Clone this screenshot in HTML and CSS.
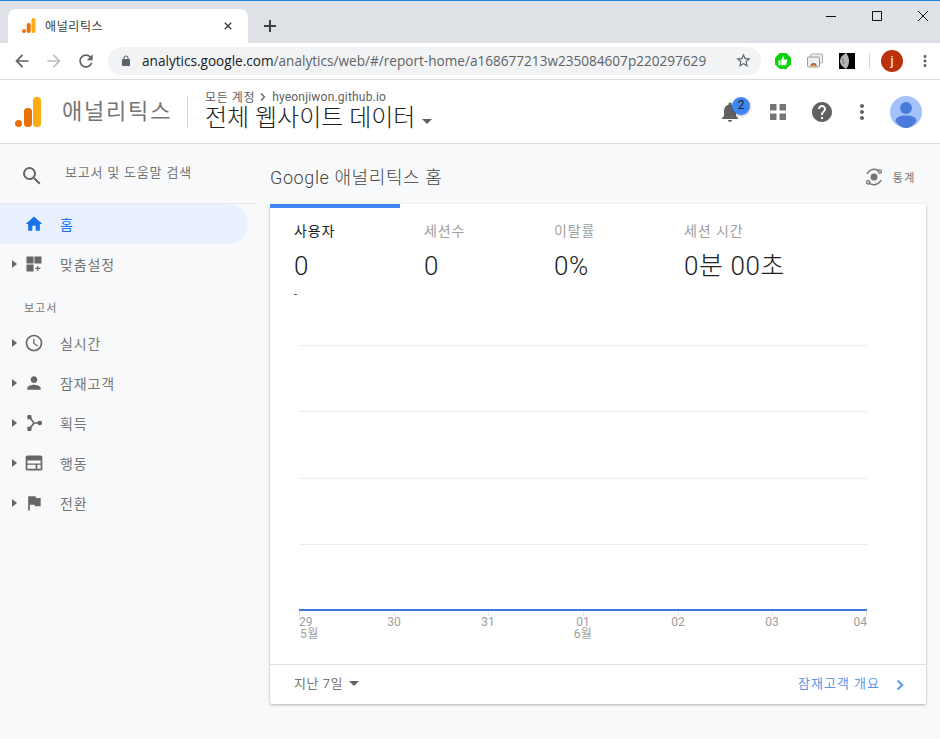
FILE: index.html
```html
<!DOCTYPE html>
<html lang="ko">
<head>
    <meta charset="utf-8">
    <title>애널리틱스</title>
    <link rel="stylesheet" href="styles.css">
</head>
<body>
    <!-- browser chrome -->
    <div class="tabstrip">
        <div class="tab">
            <svg class="tab-logo" viewBox="0 0 14 15"><rect x="9.5" y="0" width="4" height="15" rx="2" fill="#fbac17"/><rect x="4.7" y="5" width="4" height="10" rx="2" fill="#e8710a"/><circle cx="2" cy="13" r="2" fill="#e8710a"/></svg>
            <span class="tab-title">애널리틱스</span>
            <svg class="tab-close" viewBox="0 0 10 10"><path d="M1 1l8 8M9 1l-8 8"/></svg>
        </div>
        <svg class="new-tab" viewBox="0 0 12 12"><path d="M6 0v12M0 6h12"/></svg>
        <div class="window-controls">
            <svg viewBox="0 0 12 12"><path d="M1 6.5h10"/></svg>
            <svg viewBox="0 0 12 12"><path d="M1.5 1.5h9v9h-9z"/></svg>
            <svg viewBox="0 0 12 12"><path d="M1 1l10 10M11 1L1 11"/></svg>
        </div>
    </div>
    <div class="toolbar">
        <svg class="tool-icon" viewBox="0 0 24 24"><path d="M20 11H7.83l5.59-5.59L12 4l-8 8 8 8 1.41-1.41L7.83 13H20v-2z"/></svg>
        <svg class="tool-icon disabled" viewBox="0 0 24 24"><path d="M12 4l-1.41 1.41L16.17 11H4v2h12.17l-5.58 5.59L12 20l8-8z"/></svg>
        <svg class="tool-icon" viewBox="0 0 24 24"><path d="M17.65 6.35C16.2 4.9 14.21 4 12 4c-4.42 0-7.99 3.58-7.99 8s3.57 8 7.99 8c3.73 0 6.84-2.55 7.73-6h-2.08c-.82 2.33-3.04 4-5.65 4-3.31 0-6-2.69-6-6s2.69-6 6-6c1.66 0 3.14.69 4.22 1.78L13 11h7V4l-2.35 2.35z"/></svg>
        <div class="omnibox">
            <svg class="lock" viewBox="0 0 24 24"><path d="M18 8h-1V6c0-2.76-2.24-5-5-5S7 3.24 7 6v2H6c-1.1 0-2 .9-2 2v10c0 1.1.9 2 2 2h12c1.1 0 2-.9 2-2V10c0-1.1-.9-2-2-2zm-3.1 0H9.1V6c0-1.71 1.39-3.1 2.9-3.1 1.71 0 2.9 1.39 2.9 3.1v2z"/></svg>
            <span class="url"><b>analytics.google.com</b>/analytics/web/#/report-home/a168677213w235084607p220297629</span>
            <svg class="star" viewBox="0 0 24 24"><path d="M22 9.24l-7.19-.62L12 2 9.19 8.63 2 9.24l5.46 4.73L5.82 21 12 17.27 18.18 21l-1.63-7.03L22 9.24zM12 15.4l-3.76 2.27 1-4.28-3.32-2.88 4.38-.38L12 6.1l1.71 4.04 4.38.38-3.32 2.88 1 4.28L12 15.4z"/></svg>
        </div>
        <div class="extensions">
            <svg class="ext thumb" viewBox="0 0 16 16"><path d="M4.7 0h6.6L16 4.7v6.6L11.3 16H4.7L0 11.3V4.7z" fill="#0fd20f"/><path d="M3.5 7.5h2v4.7h-2zM6.2 7.3L8 3.6c.9 0 1.3.7 1.1 1.5l-.3 1.5h2.6c.7 0 1 .5.8 1.2l-1 3.6c-.2.6-.5.8-1 .8H6.2z" fill="#fff"/></svg>
            <svg class="ext" viewBox="0 0 16 16"><rect x="3.5" y="1" width="12" height="9" rx="1" fill="#eee" stroke="#aaa"/><rect x=".5" y="4" width="12" height="10" rx="1" fill="#eee" stroke="#999"/><path d="M3.5 13a3 3 0 0 1 6 0z" fill="#e8453c"/><path d="M6.5 10a3 3 0 0 1 3 3H8z" fill="#4285f4"/><circle cx="6.5" cy="13" r="1.2" fill="#fbbc05"/></svg>
            <svg class="ext moon" viewBox="0 0 16 16"><rect width="16" height="16" fill="#000"/><path d="M7 0C3 2 1 5 1 8s2 6 6 8c2-2 3-5 3-8S9 2 7 0z" fill="#b5b5b5"/><path d="M3 5l2 1-1 2 2 2-2 1z" fill="#777"/></svg>
            <span class="ext-divider"></span>
            <span class="profile">j</span>
            <svg class="tool-icon kebab" viewBox="0 0 24 24"><path d="M12 8c1.1 0 2-.9 2-2s-.9-2-2-2-2 .9-2 2 .9 2 2 2zm0 2c-1.1 0-2 .9-2 2s.9 2 2 2 2-.9 2-2-.9-2-2-2zm0 6c-1.1 0-2 .9-2 2s.9 2 2 2 2-.9 2-2-.9-2-2-2z"/></svg>
        </div>
    </div>

    <!-- analytics header -->
    <header class="app-header">
        <svg class="ga-logo" viewBox="0 0 26 30"><rect x="18" y="0" width="8" height="30" rx="3.5" fill="#fbac17"/><rect x="9" y="11" width="8" height="19" rx="3.5" fill="#e8710a"/><circle cx="3.5" cy="26.5" r="3.5" fill="#e8710a"/></svg>
        <span class="app-name">애널리틱스</span>
        <div class="view-picker">
            <div class="crumbs">
                <span class="crumb-kr">모든 계정</span>
                <svg class="crumb-arrow" viewBox="0 0 6 8"><path d="M1 .5L4.5 4 1 7.5"/></svg>
                <span class="crumb-site">hyeonjiwon.github.io</span>
            </div>
            <div class="view-name">전체 웹사이트 데이터 <span class="caret"></span></div>
        </div>
        <div class="header-actions">
            <div class="bell">
                <svg class="head-icon" viewBox="0 0 24 24"><path d="M12 22c1.1 0 2-.9 2-2h-4c0 1.1.89 2 2 2zm6-6v-5c0-3.07-1.64-5.64-4.5-6.32V4c0-.83-.67-1.5-1.5-1.5s-1.5.67-1.5 1.5v.68C7.63 5.36 6 7.92 6 11v5l-2 2v1h16v-1l-2-2z"/></svg>
                <span class="badge">2</span>
            </div>
            <svg class="head-icon apps" viewBox="0 0 24 24"><path d="M4 4h6.5v6.5H4zM13.5 4H20v6.5h-6.5zM4 13.5h6.5V20H4zM13.5 13.5H20V20h-6.5z"/></svg>
            <svg class="head-icon" viewBox="0 0 24 24"><path d="M12 2C6.48 2 2 6.48 2 12s4.48 10 10 10 10-4.48 10-10S17.52 2 12 2zm1 17h-2v-2h2v2zm2.07-7.75l-.9.92C13.45 12.9 13 13.5 13 15h-2v-.5c0-1.1.45-2.1 1.17-2.83l1.24-1.26c.37-.36.59-.86.59-1.41 0-1.1-.9-2-2-2s-2 .9-2 2H8c0-2.21 1.79-4 4-4s4 1.79 4 4c0 .88-.36 1.68-.93 2.25z"/></svg>
            <svg class="head-icon" viewBox="0 0 24 24"><path d="M12 8c1.1 0 2-.9 2-2s-.9-2-2-2-2 .9-2 2 .9 2 2 2zm0 2c-1.1 0-2 .9-2 2s.9 2 2 2 2-.9 2-2-.9-2-2-2zm0 6c-1.1 0-2 .9-2 2s.9 2 2 2 2-.9 2-2-.9-2-2-2z"/></svg>
            <svg class="avatar" viewBox="0 0 32 32"><circle cx="16" cy="16" r="16" fill="#a3c1fa"/><circle cx="16" cy="12" r="6" fill="#4a7bdc"/><path d="M5.5 25c0-4 5-5.5 10.5-5.5s10.5 1.5 10.5 5.5c-2.5 4-6.5 7-10.5 7s-8-3-10.5-7z" fill="#4a7bdc"/></svg>
        </div>
    </header>

    <div class="layout">
        <nav class="sidebar">
            <div class="search-row">
                <svg class="search-icon" viewBox="0 0 24 24"><path d="M15.5 14h-.79l-.28-.27A6.471 6.471 0 0 0 16 9.5 6.5 6.5 0 1 0 9.5 16c1.61 0 3.09-.59 4.23-1.57l.27.28v.79l5 4.99L20.49 19l-4.99-5zm-6 0C7.01 14 5 11.99 5 9.5S7.01 5 9.5 5 14 7.01 14 9.5 11.99 14 9.5 14z"/></svg>
                <span class="search-text">보고서 및 도움말 검색</span>
            </div>
            <div class="nav-item active">
                <svg class="nav-icon" viewBox="0 0 24 24"><path d="M10 20v-6h4v6h5v-8h3L12 3 2 12h3v8z"/></svg>
                <span>홈</span>
            </div>
            <div class="nav-item expandable">
                <svg class="nav-icon" viewBox="0 0 24 24"><path d="M3 3h8.5v8.5H3zM12.5 3H21v8.5h-8.5zM3 12.5h8.5V21H3zM15.8 14h1.4v2.5h2.5v1.4h-2.5v2.5h-1.4v-2.5h-2.5v-1.4h2.5z"/></svg>
                <span>맞춤설정</span>
            </div>
            <div class="nav-heading">보고서</div>
            <div class="nav-item expandable">
                <svg class="nav-icon" viewBox="0 0 24 24"><path d="M11.99 2C6.47 2 2 6.48 2 12s4.47 10 9.99 10C17.52 22 22 17.52 22 12S17.52 2 11.99 2zM12 20c-4.42 0-8-3.58-8-8s3.58-8 8-8 8 3.58 8 8-3.58 8-8 8zm.5-13H11v6l5.25 3.15.75-1.23-4.5-2.67z"/></svg>
                <span>실시간</span>
            </div>
            <div class="nav-item expandable">
                <svg class="nav-icon" viewBox="0 0 24 24"><path d="M12 12c2.21 0 4-1.79 4-4s-1.79-4-4-4-4 1.79-4 4 1.79 4 4 4zm0 2c-2.67 0-8 1.34-8 4v2h16v-2c0-2.66-5.33-4-8-4z"/></svg>
                <span>잠재고객</span>
            </div>
            <div class="nav-item expandable">
                <svg class="nav-icon" viewBox="0 0 24 24"><rect x="4" y="2.5" width="5" height="5" rx="1"/><rect x="4" y="16.5" width="5" height="5" rx="1"/><circle cx="19" cy="12" r="2.8"/><path class="nav-line" d="M7 5.5l5 6.5h6M12 12l-5 6.5"/></svg>
                <span>획득</span>
            </div>
            <div class="nav-item expandable">
                <svg class="nav-icon" viewBox="0 0 24 24"><path fill-rule="evenodd" d="M4 3h16c1.1 0 2 .9 2 2v14c0 1.1-.9 2-2 2H4c-1.1 0-2-.9-2-2V5c0-1.1.9-2 2-2zm0 6v3.5h16V9zm0 5v5h10v-5zm12 0v5h4v-5z"/></svg>
                <span>행동</span>
            </div>
            <div class="nav-item expandable">
                <svg class="nav-icon" viewBox="0 0 24 24"><path d="M14.4 6L14 4H5v17h2v-7h5.6l.4 2h7V6z"/></svg>
                <span>전환</span>
            </div>
        </nav>

        <main class="content">
            <div class="content-head">
                <h1 class="page-title">Google 애널리틱스 홈</h1>
                <div class="insights">
                    <svg class="insights-icon" viewBox="0 0 18 18"><circle cx="9" cy="9" r="3.5" fill="#757575"/><path d="M14.5 3.5A7.700 7.700 0 0 0 2 6M3.500 14.5A7.700 7.700 0 0 0 16 12" fill="none" stroke="#757575" stroke-width="1.5"/><circle cx="14.8" cy="3.6" r="1.7" fill="none" stroke="#757575" stroke-width="1.3"/><circle cx="3.2" cy="14.4" r="1.7" fill="none" stroke="#757575" stroke-width="1.3"/></svg>
                    <span>통계</span>
                </div>
            </div>
            <section class="card">
                <div class="metrics">
                    <div class="metric selected">
                        <div class="metric-label">사용자</div>
                        <div class="metric-value">0</div>
                        <div class="metric-change">-</div>
                    </div>
                    <div class="metric">
                        <div class="metric-label">세션수</div>
                        <div class="metric-value">0</div>
                    </div>
                    <div class="metric">
                        <div class="metric-label">이탈률</div>
                        <div class="metric-value">0%</div>
                    </div>
                    <div class="metric">
                        <div class="metric-label">세션 시간</div>
                        <div class="metric-value">0분 00초</div>
                    </div>
                </div>
                <svg class="chart" viewBox="0 0 656 364">
                    <path class="grid" d="M29 45.5h568M29 111.5h568M29 178.5h568M29 244.5h568"/>
                    <path class="tick" d="M29.5 310v6M124.5 310v6M218.5 310v6M313.5 310v6M408.5 310v6M502.5 310v6M596.5 310v6"/>
                    <rect class="line" x="29" y="309" width="568" height="2"/>
                    <text class="axis" x="29" y="326">29</text>
                    <text class="axis month" x="30" y="338">5월</text>
                    <text class="axis mid" x="124" y="326">30</text>
                    <text class="axis mid" x="218" y="326">31</text>
                    <text class="axis mid" x="313" y="326">01</text>
                    <text class="axis month mid" x="313" y="338">6월</text>
                    <text class="axis mid" x="408" y="326">02</text>
                    <text class="axis mid" x="502" y="326">03</text>
                    <text class="axis end" x="597" y="326">04</text>
                </svg>
                <div class="card-foot">
                    <div class="range">지난 7일 <span class="caret small"></span></div>
                    <div class="report-link">
                        <span>잠재고객 개요</span>
                        <svg class="link-chevron" viewBox="0 0 24 24"><path d="M10 6L8.59 7.41 13.17 12l-4.58 4.59L10 18l6-6z"/></svg>
                    </div>
                </div>
            </section>
        </main>
    </div>
</body>
</html>
```
FILE: styles.css
```css
* {
    box-sizing: border-box;
}

html,
body {
    height: 100%;
}

body {
    margin: 0;
    overflow: hidden;
    background: #f8f9fb;
    color: #5f6368;
    font-family: Roboto, "Noto Sans CJK KR", sans-serif;
}

/* browser chrome */
.tabstrip {
    display: flex;
    align-items: flex-end;
    height: 43px;
    padding-left: 8px;
    background: #dee1e6;
    border-top: 1px solid #1a88e0;
}

.tab {
    display: flex;
    align-items: center;
    width: 240px;
    height: 34px;
    padding: 0 14px 1px 14px;
    background: #fff;
    border-radius: 8px 8px 0 0;
}

.tab-logo {
    width: 14px;
    height: 15px;
    margin-right: 9px;
}

.tab-title {
    flex: 1;
    font-size: 12px;
    letter-spacing: 0.6px;
    color: #3c4043;
}

.tab-close {
    width: 8px;
    height: 8px;
    margin-right: 2px;
    fill: none;
    stroke: #3c4043;
    stroke-width: 1.8;
}

.new-tab {
    width: 12px;
    height: 12px;
    margin: 0 0 11px 16px;
    fill: none;
    stroke: #3c4043;
    stroke-width: 2;
}

.window-controls {
    display: flex;
    gap: 34px;
    margin: 0 11px 0 auto;
    align-self: flex-start;
    padding-top: 9px;
}

.window-controls svg {
    width: 12px;
    height: 12px;
    fill: none;
    stroke: #111;
    stroke-width: 1;
}

.toolbar {
    display: flex;
    align-items: center;
    height: 37px;
    padding: 0 0 1px 12px;
    background: #fff;
    border-bottom: 1px solid #d8d9da;
}

.tool-icon {
    width: 20px;
    height: 20px;
    margin-right: 12px;
    fill: #5f6368;
}

.tool-icon.disabled {
    fill: #bdc1c6;
}

.omnibox {
    display: flex;
    align-items: center;
    width: 653px;
    height: 28px;
    padding: 0 9px 0 12px;
    background: #f1f3f4;
    border-radius: 14px;
}

.lock {
    width: 12px;
    height: 12px;
    margin-right: 10px;
    fill: #5f6368;
}

.url {
    flex: 1;
    font-family: "Open Sans", "Noto Sans", sans-serif;
    font-size: 13.6px;
    white-space: nowrap;
    color: #5f6368;
}

.url b {
    font-weight: 400;
    color: #202124;
}

.star {
    width: 17px;
    height: 17px;
    fill: #5f6368;
}

.extensions {
    display: flex;
    align-items: center;
    flex: 1;
    padding-left: 14px;
}

.ext {
    width: 16px;
    height: 16px;
    margin-right: 14px;
}

.thumb {
    margin-right: 16px;
}

.moon {
    margin-left: 2px;
}

.ext-divider {
    width: 1px;
    height: 16px;
    margin-right: 11px;
    background: #d5d7da;
}

.profile {
    width: 22px;
    height: 22px;
    margin-right: 13px;
    border-radius: 50%;
    background: #bb310b;
    color: #fff;
    font-size: 13px;
    line-height: 22px;
    text-align: center;
}

.kebab {
    width: 18px;
    height: 18px;
    margin: 0;
}

/* analytics header */
.app-header {
    display: flex;
    align-items: center;
    height: 64px;
    padding: 0 18px 0 15px;
    background: #fff;
    border-bottom: 1px solid #dadce0;
}

.ga-logo {
    width: 26px;
    height: 30px;
    margin-right: 21px;
}

.app-name {
    width: 125px;
    margin-bottom: 6px;
    font-size: 22px;
    letter-spacing: 1.8px;
    color: #757575;
}

.view-picker {
    height: 32px;
    padding-left: 17px;
    border-left: 1px solid #d5d7da;
    margin-right: auto;
}

.crumbs {
    display: flex;
    align-items: center;
    height: 14px;
    margin-top: -6px;
    font-size: 12px;
    color: #616161;
}

.crumb-kr {
    letter-spacing: 0.6px;
}

.crumb-site {
    letter-spacing: 0.2px;
}

.crumb-arrow {
    width: 6px;
    height: 8px;
    margin: 0 6px 0 5px;
    fill: none;
    stroke: #616161;
    stroke-width: 1.3;
}

.view-name {
    font-size: 24px;
    font-weight: 300;
    line-height: 29px;
    color: #212121;
    white-space: nowrap;
}

.caret {
    display: inline-block;
    margin-left: 1px;
    vertical-align: 2px;
    border-top: 5px solid #616161;
    border-left: 5.5px solid transparent;
    border-right: 5.5px solid transparent;
}

.caret.small {
    margin-left: 2px;
}

.header-actions {
    display: flex;
    align-items: center;
    gap: 16px;
}

.bell {
    position: relative;
    display: flex;
    margin-right: 8px;
}

.head-icon {
    width: 24px;
    height: 24px;
    fill: #616161;
}

.apps {
    margin-right: 4px;
    fill: #757575;
}

.badge {
    position: absolute;
    top: -3px;
    left: 14px;
    width: 18px;
    height: 18px;
    border-radius: 50%;
    background: #3f86f4;
    box-shadow: 0 1px 3px rgba(0, 0, 0, 0.3);
    color: #212121;
    font-size: 12px;
    line-height: 17px;
    text-align: center;
}

.avatar {
    width: 32px;
    height: 32px;
}

/* sidebar */
.layout {
    display: flex;
    height: 596px;
}

.sidebar {
    width: 270px;
    padding-right: 22px;
    flex: none;
}

.search-row {
    display: flex;
    align-items: center;
    width: 256px;
    height: 60px;
    padding-left: 20px;
    border-bottom: 1px solid #e6e7e9;
    font-size: 13px;
    letter-spacing: 0.8px;
    color: #757575;
}

.search-icon {
    width: 24px;
    height: 24px;
    margin-top: 4px;
    fill: #666;
}

.search-text {
    margin-left: 21px;
    margin-bottom: 5px;
    white-space: nowrap;
}

.nav-icon {
    width: 20px;
    height: 20px;
    flex: none;
    fill: #666;
}

.nav-line {
    fill: none;
    stroke: #666;
    stroke-width: 2;
}

.nav-item {
    position: relative;
    display: flex;
    align-items: center;
    height: 40px;
    padding-left: 24px;
    font-size: 14px;
    letter-spacing: 0.9px;
    color: #757575;
}

.nav-item span {
    margin: 0 0 1px 16px;
}

.nav-item.active {
    background: #e8f0fe;
    border-radius: 0 20px 20px 0;
    color: #1a73e8;
}

.nav-item.active .nav-icon {
    fill: #1a73e8;
}

.nav-item.expandable::before {
    content: "";
    position: absolute;
    left: 12px;
    top: 16px;
    border-left: 5px solid #666;
    border-top: 4px solid transparent;
    border-bottom: 4px solid transparent;
}

.nav-heading {
    height: 39px;
    padding: 15px 0 0 24px;
    font-size: 11px;
    letter-spacing: 1px;
    color: #757575;
}

/* main column */
.content {
    width: 656px;
}

.content-head {
    display: flex;
    align-items: center;
    justify-content: space-between;
    height: 60px;
    padding-top: 4px;
}

.page-title {
    margin: 0;
    font-size: 18px;
    font-weight: 300;
    letter-spacing: 0.6px;
    color: #444;
}

.insights {
    display: flex;
    align-items: center;
    gap: 10px;
    margin: 2px 10px 0 0;
    font-size: 11px;
    letter-spacing: 1.5px;
    color: #757575;
}

.insights-icon {
    width: 18px;
    height: 18px;
}

.card {
    height: 500px;
    background: #fff;
    border-radius: 2px;
    box-shadow: 0 1px 3px rgba(0, 0, 0, 0.3);
}

.metrics {
    display: flex;
    height: 96px;
}

.metric {
    width: 130px;
    padding: 18px 0 0 24px;
    color: #9e9e9e;
}

.metric.selected {
    border-top: 4px solid #4285f4;
    padding-top: 14px;
    color: #212121;
}

.metric-label {
    font-size: 14px;
    line-height: 18px;
    letter-spacing: 0.9px;
    white-space: nowrap;
}

.metric-value {
    margin-top: 9px;
    font-size: 26px;
    font-weight: 300;
    line-height: 34px;
    letter-spacing: 0.6px;
    color: #212121;
    white-space: nowrap;
}

.metric-change {
    margin-top: 5px;
    font-size: 11px;
    line-height: 14px;
    color: #212121;
}

.chart {
    display: block;
    width: 656px;
    height: 364px;
}

.grid {
    fill: none;
    stroke: #ececec;
}

.tick {
    fill: none;
    stroke: #e4e4e4;
}

.line {
    fill: #3f78e0;
}

.axis {
    font-size: 12px;
    fill: #9e9e9e;
}

.axis.mid {
    text-anchor: middle;
}

.axis.end {
    text-anchor: end;
}

.month {
    letter-spacing: 0.4px;
}

.card-foot {
    display: flex;
    align-items: center;
    justify-content: space-between;
    height: 40px;
    padding: 0 16px 4px 24px;
    border-top: 1px solid #e0e0e0;
    font-size: 13px;
}

.range {
    letter-spacing: 0.5px;
    color: #757575;
}

.report-link {
    display: flex;
    align-items: center;
    gap: 10px;
    letter-spacing: 1px;
    color: #5c94e8;
}

.link-chevron {
    width: 20px;
    height: 20px;
    margin-top: 4px;
    fill: #5c94e8;
    stroke: #5c94e8;
    stroke-width: 0.6;
}
```
